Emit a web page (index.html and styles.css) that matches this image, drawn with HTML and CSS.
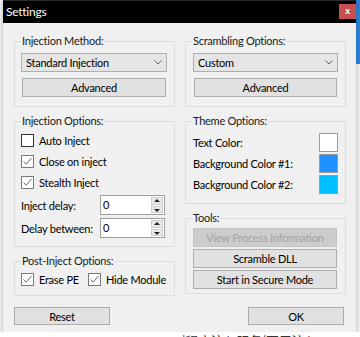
FILE: index.html
```html
<!DOCTYPE html>
<html lang="en">
<head>
    <meta charset="UTF-8">
    <meta name="viewport" content="width=device-width, initial-scale=1.0">
    <title>Settings</title>
    <link rel="stylesheet" href="styles.css">
</head>
<body>

    <div class="window">
        <div class="titlebar">
            <span class="title">Settings</span>
            <span class="close">x</span>
        </div>

        <div class="client">
            <div class="columns">
                <div class="col">
                    <div class="group g-method">
                        <span class="group-label">Injection Method:</span>
                        <div class="combo">
                            <span>Standard Injection</span>
                            <svg width="8" height="5" viewBox="0 0 8 5"><path d="M0.5 0.5 L4 4 L7.5 0.5" fill="none" stroke="#606060" stroke-width="1"/></svg>
                        </div>
                        <div class="btn">Advanced</div>
                    </div>

                    <div class="group g-options">
                        <span class="group-label">Injection Options:</span>
                        <div class="check-row">
                            <span class="box"></span>Auto Inject
                        </div>
                        <div class="check-row">
                            <span class="box checked"><svg width="11" height="11" viewBox="0 0 11 11"><path d="M1.5 5.5 L4.2 8.2 L9.5 2" fill="none" stroke="#6a6a6a" stroke-width="1"/></svg></span>Close on inject
                        </div>
                        <div class="check-row">
                            <span class="box checked"><svg width="11" height="11" viewBox="0 0 11 11"><path d="M1.5 5.5 L4.2 8.2 L9.5 2" fill="none" stroke="#6a6a6a" stroke-width="1"/></svg></span>Stealth Inject
                        </div>
                        <div class="num-row">
                            <span class="num-label">Inject delay:</span>
                            <div class="num">
                                <span class="num-value">0</span>
                                <span class="spin"><span class="up"></span><span class="down"></span></span>
                            </div>
                        </div>
                        <div class="num-row">
                            <span class="num-label">Delay between:</span>
                            <div class="num">
                                <span class="num-value">0</span>
                                <span class="spin"><span class="up"></span><span class="down"></span></span>
                            </div>
                        </div>
                    </div>

                    <div class="group g-post">
                        <span class="group-label">Post-Inject Options:</span>
                        <div class="post-row">
                            <div class="check-row first">
                                <span class="box checked"><svg width="11" height="11" viewBox="0 0 11 11"><path d="M1.5 5.5 L4.2 8.2 L9.5 2" fill="none" stroke="#6a6a6a" stroke-width="1"/></svg></span>Erase PE
                            </div>
                            <div class="check-row">
                                <span class="box checked"><svg width="11" height="11" viewBox="0 0 11 11"><path d="M1.5 5.5 L4.2 8.2 L9.5 2" fill="none" stroke="#6a6a6a" stroke-width="1"/></svg></span>Hide Module
                            </div>
                        </div>
                    </div>
                </div>

                <div class="col">
                    <div class="group g-method right">
                        <span class="group-label">Scrambling Options:</span>
                        <div class="combo">
                            <span>Custom</span>
                            <svg width="8" height="5" viewBox="0 0 8 5"><path d="M0.5 0.5 L4 4 L7.5 0.5" fill="none" stroke="#606060" stroke-width="1"/></svg>
                        </div>
                        <div class="btn">Advanced</div>
                    </div>

                    <div class="group g-theme">
                        <span class="group-label">Theme Options:</span>
                        <div class="color-row">
                            <span>Text Color:</span>
                            <span class="swatch white"></span>
                        </div>
                        <div class="color-row">
                            <span>Background Color #1:</span>
                            <span class="swatch blue1"></span>
                        </div>
                        <div class="color-row">
                            <span>Background Color #2:</span>
                            <span class="swatch blue2"></span>
                        </div>
                    </div>

                    <div class="group g-tools">
                        <span class="group-label">Tools:</span>
                        <div class="btn disabled">View Process Information</div>
                        <div class="btn">Scramble DLL</div>
                        <div class="btn">Start in Secure Mode</div>
                    </div>
                </div>
            </div>

            <div class="footer">
                <div class="btn wide">Reset</div>
                <div class="btn wide">OK</div>
            </div>
        </div>
    </div>

    <div class="below">|程序注入服务(不用注入</div>

</body>
</html>
```

FILE: styles.css
```css
body {
    margin: 0;
    width: 360px;
    height: 337px;
    overflow: hidden;
    font-family: Lato, "Noto Sans", sans-serif;
    font-size: 11px;
    letter-spacing: -0.25px;
    color: #000;
    background: linear-gradient(#2b7fd2, #2b7fd2) no-repeat right top / 4px 64px, #ececec;
}
.window {
    margin-left: 3px;
    width: 353px;
    height: 332px;
    background-color: #f0f0f0;
    box-shadow: 0px 1px 3px rgba(0, 0, 0, 0.25);
}
.titlebar {
    height: 23px;
    background-color: #000;
    border-top: 1px solid #2a2a2a;
    box-sizing: border-box;
    display: flex;
    align-items: center;
    justify-content: space-between;
}
.title {
    color: white;
    font-size: 12px;
    padding-left: 3px;
    margin-top: -1px;
}
.close {
    width: 17px;
    height: 15px;
    background-color: #c75050;
    color: white;
    font-size: 9px;
    font-weight: bold;
    line-height: 14px;
    text-align: center;
    margin-top: -2px;
}

.client {
    padding: 18px 10px 7px 11px;
}
.columns {
    display: flex;
    gap: 10px;
    align-items: flex-start;
}
.col {
    width: 161px;
    display: flex;
    flex-direction: column;
    gap: 14px;
}
.group {
    position: relative;
    box-sizing: border-box;
    border: 1px solid #dcdcdc;
}
.group-label {
    position: absolute;
    top: -8px;
    left: 6px;
    padding: 0 1px;
    line-height: 14px;
    background-color: #f0f0f0;
    color: #1a1a1a;
}

/* combo + buttons */
.g-method {
    height: 66px;
    padding: 11px 7px 0 6px;
}
.g-method.right {
    padding-left: 7px;
    padding-right: 7px;
}
.combo {
    height: 19px;
    box-sizing: border-box;
    border: 1px solid #adadad;
    background-color: #e5e5e5;
    display: flex;
    align-items: center;
    justify-content: space-between;
    padding: 0 4px 0 4px;
}
.btn {
    height: 19px;
    box-sizing: border-box;
    border: 1px solid #adadad;
    background-color: #e1e1e1;
    display: flex;
    align-items: center;
    justify-content: center;
}
.g-method .btn {
    margin: 6px 1px 0 1px;
}
.btn.disabled {
    background-color: #cccccc;
    border-color: #c4c4c4;
    color: #a3a3a3;
}

/* check boxes */
.g-options {
    height: 126px;
    padding: 8px 6px 0 6px;
}
.check-row {
    height: 21px;
    display: flex;
    align-items: center;
    white-space: nowrap;
}
.box {
    width: 13px;
    height: 13px;
    flex: none;
    box-sizing: border-box;
    border: 1px solid #333;
    background-color: white;
    margin-right: 5px;
    display: flex;
    align-items: center;
    justify-content: center;
}
.box.checked {
    border-color: #7a7a7a;
}
.num-row {
    height: 20px;
    display: flex;
    align-items: center;
    margin-top: 2px;
}
.num-row + .num-row {
    margin-top: 3px;
}
.num-label {
    width: 79px;
    white-space: nowrap;
}
.num {
    width: 65px;
    height: 20px;
    box-sizing: border-box;
    border: 1px solid #a0a0a0;
    background-color: white;
    display: flex;
    justify-content: space-between;
    padding: 1px 1px 1px 2px;
}
.num-value {
    line-height: 16px;
}
.spin {
    width: 12px;
    display: flex;
    flex-direction: column;
    gap: 1px;
}
.spin span {
    flex: 1;
    background-color: #e8e8e8;
    border: 1px solid #cfcfcf;
    position: relative;
}
.spin span::after {
    content: "";
    position: absolute;
    left: 2px;
    border-left: 3px solid transparent;
    border-right: 3px solid transparent;
}
.spin .up::after {
    top: 1px;
    border-bottom: 3px solid #222;
}
.spin .down::after {
    top: 2px;
    border-top: 3px solid #222;
}

.g-post {
    height: 35px;
    padding: 7px 6px 0 6px;
}
.post-row {
    display: flex;
}
.post-row .first {
    width: 67px;
}

/* theme */
.g-theme {
    height: 83px;
    padding: 11px 7px 0 7px;
    display: flex;
    flex-direction: column;
    gap: 2px;
}
.color-row {
    height: 19px;
    display: flex;
    align-items: center;
    justify-content: space-between;
}
.swatch {
    width: 19px;
    height: 19px;
    box-sizing: border-box;
    border: 1px solid #9a9a9a;
}
.swatch.white { background-color: #ffffff; }
.swatch.blue1 { background-color: #1e90ff; }
.swatch.blue2 { background-color: #00bfff; }

/* tools */
.g-tools {
    height: 76px;
    padding: 9px 8px 0 7px;
    display: flex;
    flex-direction: column;
    gap: 2px;
}

.footer {
    margin-top: 11px;
    display: flex;
    justify-content: space-between;
    padding-right: 2px;
}
.btn.wide {
    width: 96px;
    height: 18px;
}

.below {
    background-color: white;
    padding-left: 182px;
    font-family: "Noto Sans CJK SC", sans-serif;
    font-size: 13px;
    line-height: 14px;
    color: #333;
    padding-top: 2px;
}
```
